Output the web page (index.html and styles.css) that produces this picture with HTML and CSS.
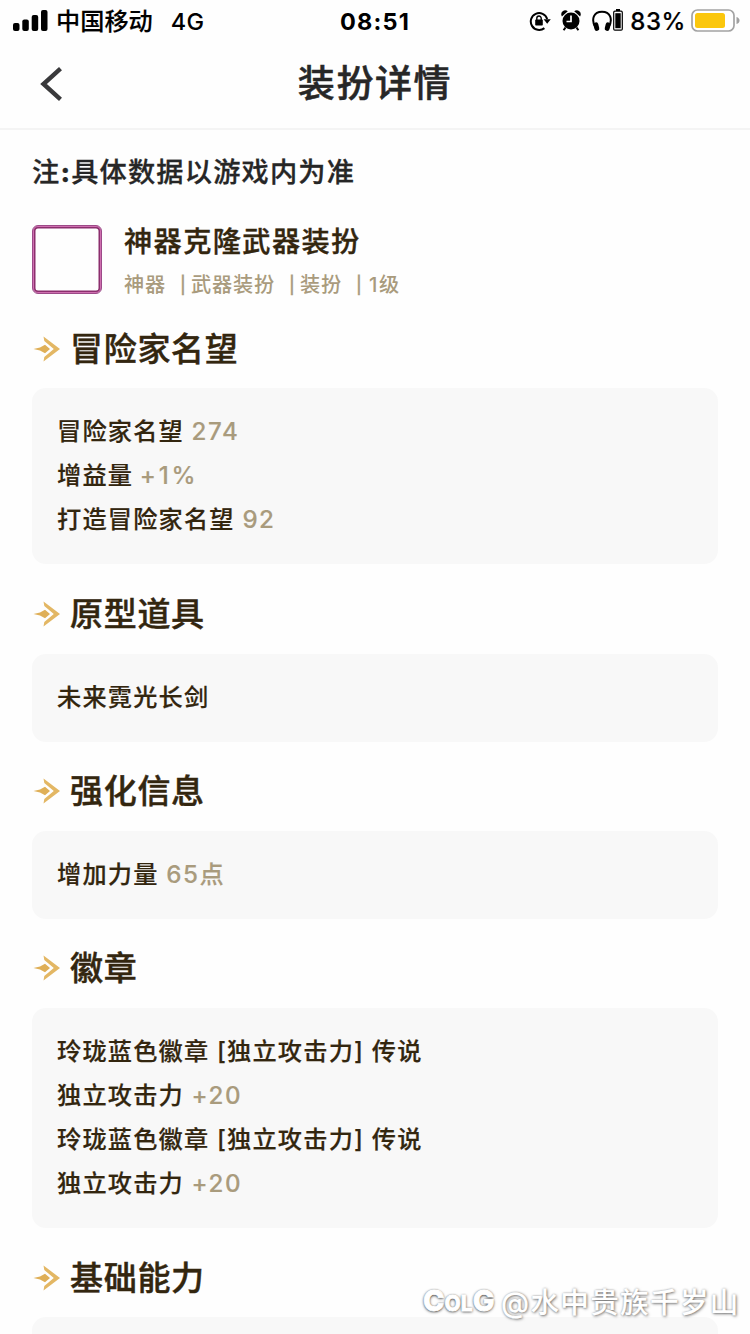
FILE: index.html
```html
<!DOCTYPE html>
<html lang="zh-CN">
<head>
<meta charset="utf-8">
<title>装扮详情</title>
<link rel="stylesheet" href="styles.css">
</head>
<body>
<svg width="0" height="0" class="defs" aria-hidden="true">
  <symbol id="spark" viewBox="0 0 28 26">
    <path d="M0.5 13 L7 11.4 L12 8.8 L17 13 L12 17.2 L7 14.6 Z" fill="#dfaf57"/>
    <path d="M10.5 0.5 L27 13 L10.5 25.5 L11.3 21 L20.8 13 L11.3 5 Z" fill="#e3b764"/>
  </symbol>
</svg>
<div class="screen">
  <div class="status">
    <svg class="signal" width="35" height="22" viewBox="0 0 35 22">
      <rect x="0" y="13" width="6.5" height="8" rx="2"/><rect x="9.3" y="9.5" width="6.5" height="11.5" rx="2"/><rect x="18.7" y="5" width="6.5" height="16" rx="2"/><rect x="28" y="0" width="6.5" height="21" rx="2"/>
    </svg>
    <span class="carrier">中国移动</span>
    <span class="net">4G</span>
    <span class="clock">08:51</span>
    <div class="tray">
      <svg class="lock" width="22" height="22" viewBox="0 0 22 22">
        <path d="M15.4 18.1A8.4 8.4 0 1 1 18.2 9" fill="none" stroke="#000" stroke-width="2"/>
        <path d="M14.6 9.2h7.2l-3.6 4.5z"/>
        <rect x="6.2" y="9.6" width="7.6" height="6" rx="0.8"/>
        <path d="M7.8 10V8.200a2.200 2.200 0 0 1 4.400 0V10" fill="none" stroke="#000" stroke-width="1.400"/>
      </svg>
      <svg class="alarm" width="20" height="21" viewBox="0 0 20 21">
        <circle cx="10" cy="11" r="8.500"/>
        <path d="M0.900 6.400A4 4 0 0 1 6.800 1.200zM19.100 6.400A4 4 0 0 0 13.200 1.200z"/>
        <path d="M4.500 17.500 2.600 20.300M15.500 17.500 17.400 20.300" stroke="#000" stroke-width="2"/>
        <path d="M10 5.500v6H5.500" stroke="#fff" stroke-width="1.700" fill="none"/>
      </svg>
      <svg class="phones" width="20" height="22" viewBox="0 0 20 22">
        <path d="M3.600 18C-1.500 9 2 1.700 10 1.700S21.500 9 16.400 18" fill="none" stroke="#000" stroke-width="2"/>
        <rect x="2" y="12.300" width="4.800" height="8.600" rx="2.200" transform="rotate(-14 4.400 16.600)"/>
        <rect x="13.200" y="12.300" width="4.800" height="8.600" rx="2.200" transform="rotate(14 15.600 16.600)"/>
      </svg>
      <svg class="minibat" width="10" height="22" viewBox="0 0 10 22">
        <rect x="3" y="0" width="4" height="2"/><rect x="0.700" y="2.200" width="8.600" height="19" rx="1.200" fill="none" stroke="#000" stroke-width="1.200"/><rect x="2.300" y="4.200" width="5.400" height="15"/>
      </svg>
      <span class="percent">83%</span>
      <svg class="battery" width="49" height="23" viewBox="0 0 49 23">
        <rect x="1" y="1" width="42" height="21" rx="5.500" fill="#fff" stroke="#a3a3a3" stroke-width="1.700"/>
        <rect x="4" y="4" width="30" height="15" rx="2.500" fill="#fbc70d"/>
        <path d="M45.500 8q3 1 3 3.500t-3 3.500z" fill="#a0a0a0"/>
      </svg>
    </div>
  </div>

  <header class="nav">
    <svg class="back" width="23" height="34" viewBox="0 0 23 34"><path d="M20.500 1.700 3.500 17 20.500 32.300" fill="none" stroke="#39393b" stroke-width="4.400"/></svg>
    <h1>装扮详情</h1>
  </header>

  <main>
    <p class="note">注<b>:</b>具体数据以游戏内为准</p>
    <div class="item">
      <div class="frame"></div>
      <div class="info">
        <div class="name">神器克隆武器装扮</div>
        <div class="tags"><span>神器</span><span><i>|</i>武器装扮</span><span><i>|</i>装扮</span><span><i>|</i>1级</span></div>
      </div>
    </div>

    <section>
      <h2><svg class="mark"><use href="#spark"/></svg>冒险家名望</h2>
      <div class="card">
        <p>冒险家名望 <em>274</em></p>
        <p>增益量 <em class="percent-gain">+1%</em></p>
        <p>打造冒险家名望 <em>92</em></p>
      </div>
    </section>
    <section>
      <h2><svg class="mark"><use href="#spark"/></svg>原型道具</h2>
      <div class="card"><p>未来霓光长剑</p></div>
    </section>
    <section>
      <h2><svg class="mark"><use href="#spark"/></svg>强化信息</h2>
      <div class="card"><p>增加力量 <em>65点</em></p></div>
    </section>
    <section>
      <h2><svg class="mark"><use href="#spark"/></svg>徽章</h2>
      <div class="card">
        <p>玲珑蓝色徽章 [独立攻击力] 传说</p>
        <p>独立攻击力 <em>+20</em></p>
        <p>玲珑蓝色徽章 [独立攻击力] 传说</p>
        <p>独立攻击力 <em>+20</em></p>
      </div>
    </section>
    <section>
      <h2><svg class="mark"><use href="#spark"/></svg>基础能力</h2>
      <div class="card"><p></p></div>
    </section>
  </main>
  <div class="watermark"><span class="logo">C<small>OL</small>G</span><span class="user">@水中贵族千岁山</span></div>
</div>
</body>
</html>
```
FILE: styles.css
```css
* { box-sizing: border-box; margin: 0; padding: 0; }
body { background: #fff; font-family: Inter, "Noto Sans CJK SC", sans-serif; font-weight: 500; }
.defs { position: absolute; }
.screen { position: relative; width: 750px; height: 1334px; overflow: hidden; background: #fefefe; }

.status { position: relative; display: flex; align-items: center; height: 42px; padding-left: 13px; color: #000; }
.signal { margin-top: -1px; }
.carrier { margin-left: 8px; padding-top: 1px; font-size: 24.200px; line-height: 42px; -webkit-text-stroke: 0.150px; }
.net { margin-left: 18px; font-size: 23.500px; letter-spacing: 0.300px; }
.clock { position: absolute; left: 0; right: 0; text-align: center; font-size: 23.500px; font-weight: 700; letter-spacing: 1.200px; }
.tray { display: flex; align-items: center; margin-left: auto; padding-right: 10px; }
.alarm { margin-left: 10px; margin-top: -2px; }
.phones { margin-left: 11px; }
.minibat { margin-left: 1px; margin-top: -2px; }
.percent { margin-left: 7px; font-size: 24px; letter-spacing: 0.600px; -webkit-text-stroke: 0.200px; }
.battery { margin-left: 5px; margin-top: -2px; }

.nav { display: flex; align-items: center; height: 88px; padding: 0 40px; border-bottom: 2px solid #f4f4f4; }
.back { margin-top: -2px; }
.nav h1 { flex: 1; margin-right: 23px; text-align: center; color: #272727; font-size: 37px; font-weight: 500; line-height: 82px; padding-bottom: 2px; letter-spacing: 1.600px; -webkit-text-stroke: 0.500px; }

main { padding: 0 32px; }
.note { height: 95px; line-height: 86px; font-size: 27.200px; letter-spacing: 1.200px; color: #262626; -webkit-text-stroke: 0.300px; }
.note b { font-weight: 800; }
.item { display: flex; height: 84.400px; }
.frame { width: 70px; height: 69px; border: 1px solid #9c4a88; border-radius: 6px; box-shadow: inset 0 0 0 1px #cf6fb0, inset 0 0 0 2.500px #8c2f6e; }
.info { margin-left: 22px; }
.name { height: 35px; line-height: 35px; font-size: 28.200px; letter-spacing: 1.400px; color: #33260f; -webkit-text-stroke: 0.350px; }
.tags { display: flex; align-items: center; height: 50px; line-height: 50px; font-size: 20.200px; letter-spacing: 0.800px; color: #a99b7d; }
.tags span { display: flex; align-items: center; }
.tags span + span { margin-left: 12.500px; }
.tags span:last-child { letter-spacing: 1.800px; }
.tags i { width: 12.500px; font-style: normal; font-size: 17px; letter-spacing: 0; padding-left: 1.500px; -webkit-text-stroke: 0.300px; }
.tags span:last-child i { width: 14.500px; }

h2 { display: flex; align-items: center; height: 79px; font-size: 33px; font-weight: 500; line-height: 79px; padding-top: 1px; letter-spacing: 0.700px; color: #33260f; -webkit-text-stroke: 0.450px; }
.mark { width: 28px; height: 26px; margin: -1px 9px 0 1px; }
section + section { margin-top: 10.200px; }
.card { padding: 22px 25px; border-radius: 14px; background: #f8f8f8; }
.card p { height: 44px; line-height: 44px; font-size: 24.200px; letter-spacing: 1.200px; color: #33260f; white-space: pre; -webkit-text-stroke: 0.200px; }
.card em { font-style: normal; letter-spacing: 1.500px; color: #a99b7d; -webkit-text-stroke: 0.150px; }
.card .percent-gain { margin-left: -1px; letter-spacing: 2.800px; }

.watermark { position: absolute; left: 423px; top: 1278px; display: flex; align-items: center; height: 44px; color: #fff; text-shadow: 1px 1px 3px rgba(0,0,0,.5), 0 0 2px rgba(0,0,0,.35); white-space: nowrap; }
.logo { width: 78px; font-size: 29px; font-weight: 800; letter-spacing: 0; -webkit-text-stroke: 0.800px #fff; text-shadow: 0 1px 3px rgba(0,0,0,.7), 0 0 2px rgba(0,0,0,.6); }
.logo small { font-size: 21px; }
.user { font-size: 28.500px; letter-spacing: 1.400px; -webkit-text-stroke: 0.200px; }
```
